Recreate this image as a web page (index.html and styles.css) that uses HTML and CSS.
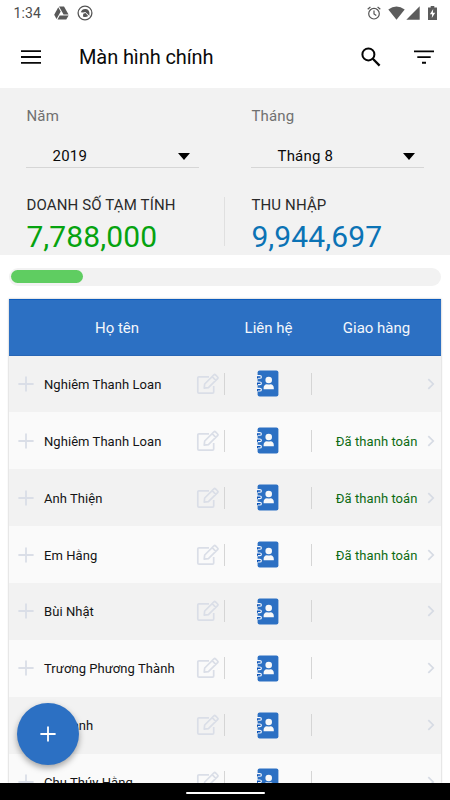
FILE: index.html
```html
<!DOCTYPE html>
<html lang="vi">
<head>
<meta charset="utf-8">
<title>Màn hình chính</title>
<link rel="stylesheet" href="styles.css">
</head>
<body>
<svg class="defs" aria-hidden="true">
  <symbol id="plus" viewBox="0 0 16 16"><path d="M8 .4v15.2M.4 8h15.2" fill="none" stroke="currentColor" stroke-width="1.8"/></symbol>
  <symbol id="edit" viewBox="0 0 24 22"><g fill="none" stroke="currentColor" stroke-width="1.7" stroke-linejoin="round"><path d="M13 3.800H3q-1.200 0-1.200 1.200v14q0 1.200 1.200 1.200h13.500q1.200 0 1.200-1.200v-6"/><path d="M8.200 15.200l.5-4.200 9.200-9.100q.8-.8 1.600 0l2.100 2.100q.8.8 0 1.600l-9.200 9.100zM16.200 3.700l3.600 3.600"/></g></symbol>
  <symbol id="contact" viewBox="0 0 23 27"><rect x="1.600" y=".5" width="20.800" height="26" rx="2" fill="#2c70c3"/><g fill="none" stroke="#0d55b8" stroke-width="2.600"><path d="M1 7h4M1 13.400h4M1 19.800h4"/></g><g fill="none" stroke="#f4f6fa" stroke-width="1.100"><path d="M.2 5.600h3.600q1.600 0 1.600 1.300T3.800 8.200H2M.2 12h3.600q1.600 0 1.600 1.300t-1.600 1.300H2M.2 18.400h3.600q1.600 0 1.600 1.300T3.800 21H2"/></g><circle cx="12.700" cy="10" r="3.300" fill="#f8f8f8"/><path d="M7.600 19.300v-1.200q0-3.600 3.400-3.900 1.700.8 3.400 0 3.400.3 3.400 3.900v1.200z" fill="#f8f8f8"/></symbol>
  <symbol id="chevron" viewBox="0 0 8 12"><path d="M1.300 1.200 6.200 6l-4.900 4.800" fill="none" stroke="currentColor" stroke-width="1.700"/></symbol>
</svg>
<div class="screen">
  <div class="statusbar">
    <span class="clock">1:34</span>
    <svg class="drive" viewBox="0 0 15 14" fill="#595959"><path d="M5 .5h5l4.500 8h-5z"/><path d="M4.300 1.300 6.700 5.600 2.500 13 .2 8.800z"/><path d="M5.700 9.500h8.900L12.300 13.400H3.500z"/></svg>
    <svg class="badge" viewBox="0 0 16 16"><circle cx="8" cy="8" r="6.900" fill="none" stroke="#555" stroke-width="1.300"/><path d="M3.700 7.300Q5 3.700 8.500 3.900q3.400.3 3.900 3.700v3.200L10 8.600 8.300 6.900 6 7.600z" fill="#555"/><path d="m6.300 8.800 2.200-.7 2.700 2.900q-2.700 2-5.300.4z" fill="#555"/></svg>
    <span class="spacer"></span>
    <svg class="alarm" viewBox="0 0 14 14" fill="none" stroke="#555" stroke-width="1.200"><circle cx="7" cy="7.700" r="5.300"/><path d="M7 4.500v3.400l2.300 1.600M.7 3.300 3.400 1M13.300 3.300 10.600 1"/></svg>
    <svg class="wifi" viewBox="0 0 17 14" fill="#5c5c5c"><path d="M.3 3.500q8.200-6 16.400 0L8.500 13.800z"/></svg>
    <svg class="signal" viewBox="0 0 14 14" fill="#5c5c5c"><path d="M13.700.3v13.400H.3z"/></svg>
    <svg class="battery" viewBox="0 0 9 14"><path d="M2.700 0h3.600v1.500H9V14H0V1.500h2.700z" fill="#5c5c5c"/><path d="M5.200 3 1.900 8.300h2.200L3.800 12l3.400-5.300H4.900z" fill="#fff"/></svg>
  </div>
  <header class="appbar">
    <svg class="menu" viewBox="0 0 20 14"><path d="M0 1.200h20M0 7h20M0 12.800h20" stroke="#0a0a0a" stroke-width="1.800"/></svg>
    <h1>Màn hình chính</h1>
    <svg class="search" viewBox="0 0 20 20" fill="none" stroke="#050505"><circle cx="7.400" cy="7.400" r="6" stroke-width="2"/><path d="m11.800 11.800 6.800 6.800" stroke-width="2.300"/></svg>
    <svg class="filter" viewBox="0 0 20 14"><path d="M0 1.400h20M3.300 7.100h13.400M8 12.800h4" stroke="#050505" stroke-width="1.900"/></svg>
  </header>
  <section class="summary">
    <div class="col">
      <label>Năm</label>
      <div class="select"><span>2019</span><i></i></div>
      <div class="caption">DOANH SỐ TẠM TÍNH</div>
      <div class="amount green">7,788,000</div>
    </div>
    <div class="divider"></div>
    <div class="col">
      <label>Tháng</label>
      <div class="select"><span>Tháng 8</span><i></i></div>
      <div class="caption">THU NHẬP</div>
      <div class="amount blue">9,944,697</div>
    </div>
  </section>
  <div class="track"><div class="bar"></div></div>
  <main class="table">
    <div class="head"><span>Họ tên</span><span>Liên hệ</span><span>Giao hàng</span></div>
    <div class="row"><svg class="plus"><use href="#plus"/></svg><span class="name">Nghiêm Thanh Loan</span><svg class="edit"><use href="#edit"/></svg><span class="contact"><svg><use href="#contact"/></svg></span><span class="state"></span><svg class="chevron"><use href="#chevron"/></svg></div>
    <div class="row"><svg class="plus"><use href="#plus"/></svg><span class="name">Nghiêm Thanh Loan</span><svg class="edit"><use href="#edit"/></svg><span class="contact"><svg><use href="#contact"/></svg></span><span class="state">Đã thanh toán</span><svg class="chevron"><use href="#chevron"/></svg></div>
    <div class="row"><svg class="plus"><use href="#plus"/></svg><span class="name">Anh Thiện</span><svg class="edit"><use href="#edit"/></svg><span class="contact"><svg><use href="#contact"/></svg></span><span class="state">Đã thanh toán</span><svg class="chevron"><use href="#chevron"/></svg></div>
    <div class="row"><svg class="plus"><use href="#plus"/></svg><span class="name">Em Hằng</span><svg class="edit"><use href="#edit"/></svg><span class="contact"><svg><use href="#contact"/></svg></span><span class="state">Đã thanh toán</span><svg class="chevron"><use href="#chevron"/></svg></div>
    <div class="row"><svg class="plus"><use href="#plus"/></svg><span class="name">Bùi Nhật</span><svg class="edit"><use href="#edit"/></svg><span class="contact"><svg><use href="#contact"/></svg></span><span class="state"></span><svg class="chevron"><use href="#chevron"/></svg></div>
    <div class="row"><svg class="plus"><use href="#plus"/></svg><span class="name">Trương Phương Thành</span><svg class="edit"><use href="#edit"/></svg><span class="contact"><svg><use href="#contact"/></svg></span><span class="state"></span><svg class="chevron"><use href="#chevron"/></svg></div>
    <div class="row"><svg class="plus"><use href="#plus"/></svg><span class="name">Vũ Oanh</span><svg class="edit"><use href="#edit"/></svg><span class="contact"><svg><use href="#contact"/></svg></span><span class="state"></span><svg class="chevron"><use href="#chevron"/></svg></div>
    <div class="row"><svg class="plus"><use href="#plus"/></svg><span class="name">Chu Thúy Hằng</span><svg class="edit"><use href="#edit"/></svg><span class="contact"><svg><use href="#contact"/></svg></span><span class="state"></span><svg class="chevron"><use href="#chevron"/></svg></div>
  </main>
  <footer class="navbar"><span></span></footer>
  <button class="fab" aria-label="Thêm"><svg><use href="#plus"/></svg></button>
</div>
</body>
</html>
```

FILE: styles.css
```css
* { box-sizing: border-box; }
body { margin: 0; font-family: Roboto, "Noto Sans", sans-serif; background: #fff; }
svg { display: block; flex: none; }
.defs { position: absolute; width: 0; height: 0; }
.screen { position: relative; width: 450px; height: 800px; overflow: hidden; display: flex; flex-direction: column; }
.statusbar { flex: none; height: 26px; display: flex; align-items: center; padding: 0 13px 0 13.5px; }
.clock { width: 40px; font-size: 14px; letter-spacing: .1px; color: #4c4c4c; }
.drive { width: 15px; height: 14px; }
.badge { width: 16px; height: 16px; margin-left: 8px; }
.spacer { flex: 1; }
.alarm { width: 14px; height: 14px; }
.wifi { width: 17px; height: 14px; margin-left: 7px; }
.signal { width: 14px; height: 14px; margin-left: 1px; }
.battery { width: 9px; height: 14px; margin-left: 8px; }
.appbar { flex: none; height: 62px; display: flex; align-items: center; padding: 0 16px 0 21px; }
.menu { width: 20px; height: 14px; }
.appbar h1 { flex: 1; margin: 0 0 0 38px; font-size: 20px; font-weight: 400; letter-spacing: -.1px; color: #0a0a0a; }
.search { width: 20px; height: 20px; margin-right: 33px; margin-top: -1px; }
.filter { width: 20px; height: 14px; margin-top: -1px; }
.summary { flex: none; height: 167px; background: #f2f2f2; display: flex; padding: 0 26px; }
.col { width: 173px; padding-top: 18px; }
.col label { display: block; font-size: 15px; line-height: 20px; letter-spacing: .2px; padding-left: .4px; color: #707070; }
.select { display: flex; align-items: center; height: 24px; margin-top: 18px; padding: 0 9.500px 0 26.500px; border-bottom: 1.500px solid #d6d6d6; font-size: 15px; letter-spacing: .2px; color: #0a0a0a; }
.select span { flex: 1; }
.select i { border: 6.500px solid transparent; border-top: 7px solid #000; border-bottom: 0; margin-top: 1px; }
.caption { margin-top: 26px; font-size: 15px; line-height: 20px; letter-spacing: .15px; padding: 1px 0 0 .4px; color: #2a2a2a; white-space: nowrap; }
.amount { font-size: 30px; line-height: 36px; margin-top: 4px; padding-left: .4px; letter-spacing: .1px; }
.green { color: #06a30f; }
.blue { color: #0b73b5; }
.divider { width: 1.500px; height: 49px; margin: 109px 26px 0 24.500px; background: #e0e0e0; flex: none; }
.track { flex: none; height: 18px; margin: 13px 9px 12px; padding: 2px; border-radius: 9px; background: #f2f2f2; }
.bar { width: 72px; height: 13px; border-radius: 7px; background: #5fcd61; }
.table { flex: 1; min-height: 0; overflow: hidden; margin: 1px 9px 0; background: #fafafa; box-shadow: 0 0 2px #0000004d; }
.head { display: flex; height: 56.500px; background: #2c70c3; border-top: 1px solid #0d5cbd; border-bottom: 1px solid #2866b5; color: #f4f7fb; font-size: 15px; line-height: 56px; text-align: center; }
.head span:nth-child(1) { width: 216px; }
.head span:nth-child(2) { width: 87px; }
.head span:nth-child(3) { flex: 1; }
.row { display: flex; align-items: center; height: 56.860px; padding: 0 6.500px 0 9px; font-size: 13px; color: #141414; }
.row:nth-child(even) { background: #f2f2f2; }
.plus { width: 16px; height: 16px; color: #dadee7; }
.name { width: 152px; margin-left: 10px; padding-top: 1px; white-space: nowrap; letter-spacing: .06px; }
.edit { width: 24px; height: 22px; color: #dadee7; margin-right: 4px; }
.contact { width: 88px; height: 22px; border: solid #d5d5d5; border-width: 0 1px; display: flex; align-items: center; justify-content: center; }
.contact svg { width: 23px; height: 27px; margin-right: 1px; }
.state { flex: 1; text-align: right; color: #0d6b12; padding: 1px 9px 0 0; letter-spacing: .07px; white-space: nowrap; }
.chevron { width: 8px; height: 12px; color: #d6dbe4; }
.navbar { flex: none; height: 17px; background: #000; display: flex; justify-content: center; align-items: center; padding-top: 2px; position: relative; }
.navbar span { width: 79px; height: 2px; border-radius: 1px; background: #fff; }
.fab { position: absolute; left: 17px; top: 703px; width: 62px; height: 62px; border: 0; border-radius: 50%; padding: 0; background: #2c70c3; color: #fff; display: flex; align-items: center; justify-content: center; box-shadow: 0 3px 6px #0000005a; }
.fab svg { width: 16px; height: 16px; }
```
